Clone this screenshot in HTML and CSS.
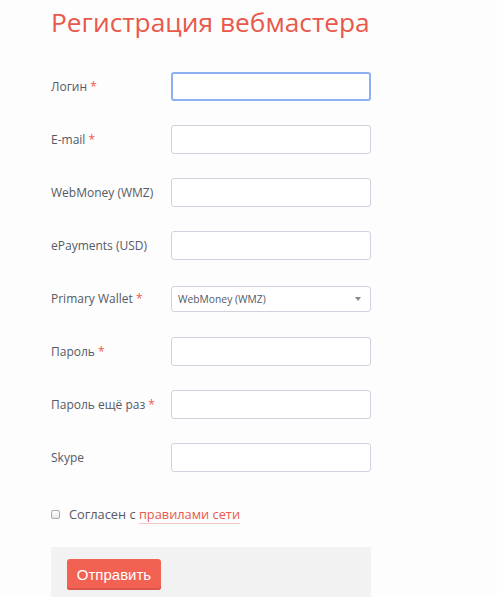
FILE: index.html
```html
<!DOCTYPE html>
<html lang="ru">
<head>
<meta charset="utf-8">
<link rel="stylesheet" href="styles.css">
</head>
<body>
<div class="page">
  <h1 class="title">Регистрация вебмастера</h1>
  <form class="form">
    <div class="row"><label class="label">Логин <span class="req">*</span></label><input class="field focused" type="text"></div>
    <div class="row"><label class="label">E-mail <span class="req">*</span></label><input class="field" type="text"></div>
    <div class="row"><label class="label">WebMoney (WMZ)</label><input class="field" type="text"></div>
    <div class="row"><label class="label">ePayments (USD)</label><input class="field" type="text"></div>
    <div class="row"><label class="label">Primary Wallet <span class="req">*</span></label>
      <div class="select"><span class="select-text">WebMoney (WMZ)</span><span class="arrow"></span></div>
    </div>
    <div class="row"><label class="label">Пароль <span class="req">*</span></label><input class="field" type="password"></div>
    <div class="row"><label class="label">Пароль ещё раз <span class="req">*</span></label><input class="field" type="password"></div>
    <div class="row"><label class="label">Skype</label><input class="field" type="text"></div>
    <div class="agree"><span class="check"></span><span class="agree-text">Согласен с <a class="link" href="#">правилами сети</a></span></div>
    <div class="actions"><button class="btn" type="button">Отправить</button></div>
  </form>
</div>
</body>
</html>
```
FILE: styles.css
```css
html, body { margin: 0; padding: 0; }
body {
  background: #fdfdfd;
  font-family: "Open Sans", "Liberation Sans", sans-serif;
  color: #555a66;
}
.page { padding-left: 51px; width: 320px; }
.title {
  margin: 0;
  padding-top: 4px;
  font-size: 26.3px;
  font-weight: 400;
  line-height: normal;
  color: #e8594b;
  white-space: nowrap;
}
.form { margin-top: 32px; }
.row {
  display: flex;
  align-items: center;
  height: 29px;
  margin-bottom: 24px;
}
.label {
  width: 120px;
  font-size: 12px;
  color: #555a66;
}
.req { color: #f0574a; }
.field {
  box-sizing: border-box;
  width: 201px;
  height: 29px;
  margin: 0;
  border: 1px solid #d3d1dd;
  border-radius: 3px;
  background: #fff;
  outline: none;
}
.field.focused {
  border: 2px solid #8db0f2;
}
.select {
  box-sizing: border-box;
  width: 200px;
  height: 26px;
  border: 1px solid #d3d1dd;
  border-radius: 3px;
  background: #fff;
  display: flex;
  align-items: center;
  justify-content: space-between;
  padding: 0 9px 0 6px;
}
.select-text { font-size: 10.3px; color: #555a66; }
.arrow {
  width: 0; height: 0;
  border-left: 3px solid transparent;
  border-right: 3px solid transparent;
  border-top: 4px solid #888;
}
.agree {
  display: flex;
  align-items: center;
  margin-top: 32px;
  height: 20px;
}
.check {
  box-sizing: border-box;
  width: 9px; height: 9px;
  border: 1px solid #aaa;
  border-radius: 2px;
  background: linear-gradient(#fff, #e8e8e8);
  margin-right: 9px;
}
.agree-text { font-size: 12.8px; color: #555a66; }
.link {
  color: #e8594b;
  text-decoration: none;
  border-bottom: 1px solid #f5c6c0;
}
.actions {
  margin-top: 23px;
  background: #f2f2f2;
  padding: 12px 16px 20px;
}
.btn {
  width: 94px;
  height: 31px;
  border: none;
  border-radius: 3px;
  background: #f26253;
  box-shadow: inset 0 -2px 0 #d9554a;
  color: #fff;
  font-family: "Liberation Sans", Arial, sans-serif;
  font-size: 15px;
  padding: 0;
}
```
